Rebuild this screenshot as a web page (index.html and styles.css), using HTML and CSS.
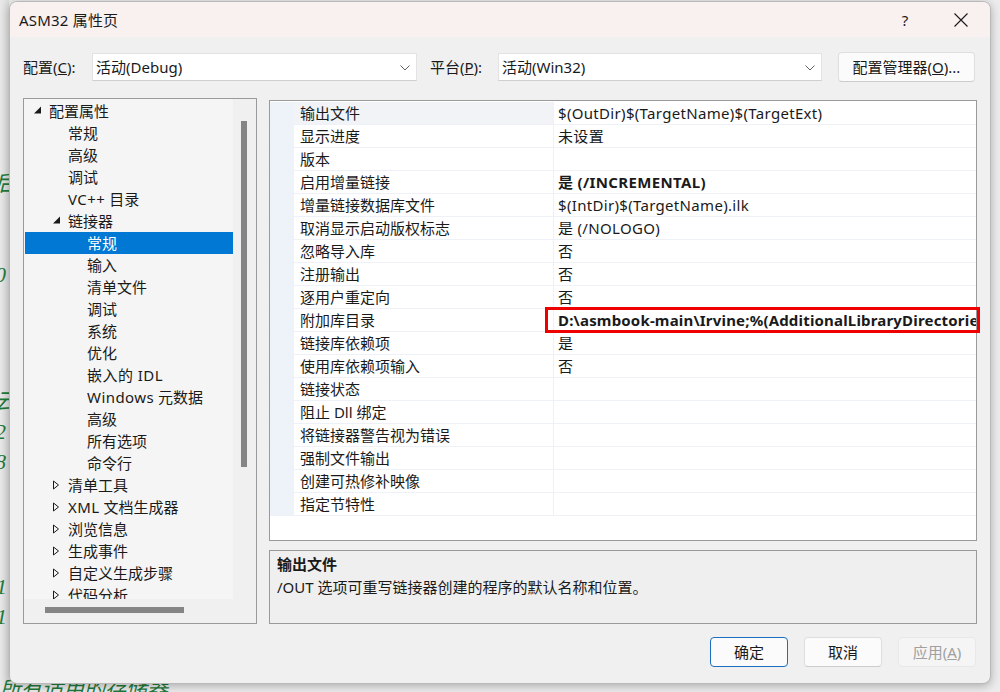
FILE: index.html
```html
<!DOCTYPE html>
<html lang="zh-CN">
<head>
<meta charset="utf-8">
<title>ASM32 属性页</title>
<link rel="stylesheet" href="styles.css">
</head>
<body>
<div class="desktop">
  <div class="bgwin">
    <span class="g g1">后</span>
    <span class="g g2">0</span>
    <span class="g g3">云</span>
    <span class="g g4">2</span>
    <span class="g g5">8</span>
    <span class="g g6">1</span>
    <span class="g g7">1</span>
    <span class="g g8">所有适用的存储器</span>
  </div>

  <div class="dialog">
    <div class="titlebar">
      <span class="title">ASM32 属性页</span>
      <div class="tb-btns">
        <span class="tb-help">?</span>
        <span class="tb-close"><svg width="16" height="16" viewBox="0 0 16 16"><path d="M1.5 1.5 L14.5 14.5 M14.5 1.5 L1.5 14.5" stroke="#1a1a1a" stroke-width="1.1" fill="none"/></svg></span>
      </div>
    </div>

    <div class="body">
      <div class="cfgrow">
        <span class="lbl lbl1">配置(<u>C</u>):</span>
        <div class="combo c1"><span>活动(Debug)</span><svg class="chev" width="10" height="6" viewBox="0 0 10 6"><path d="M0.5 0.5 L5 5 L9.5 0.5" stroke="#606060" stroke-width="1" fill="none"/></svg></div>
        <span class="lbl lbl2">平台(<u>P</u>):</span>
        <div class="combo c2"><span>活动(Win32)</span><svg class="chev" width="10" height="6" viewBox="0 0 10 6"><path d="M0.5 0.5 L5 5 L9.5 0.5" stroke="#606060" stroke-width="1" fill="none"/></svg></div>
        <button class="btn mgr">配置管理器(<u>O</u>)...</button>
      </div>

      <div class="main">
        <div class="tree">
          <div class="tree-content">
            <div class="node l0"><span class="tw"><svg width="9" height="9" viewBox="0 0 9 9"><path d="M8 0.5 L8 7.5 L1 7.5 Z" fill="#1a1a1a"/></svg></span>配置属性</div>
            <div class="node l1"><span class="tw"></span>常规</div>
            <div class="node l1"><span class="tw"></span>高级</div>
            <div class="node l1"><span class="tw"></span>调试</div>
            <div class="node l1"><span class="tw"></span><span class="lat">VC++</span>&nbsp;目录</div>
            <div class="node l1"><span class="tw"><svg width="9" height="9" viewBox="0 0 9 9"><path d="M8 0.5 L8 7.5 L1 7.5 Z" fill="#1a1a1a"/></svg></span>链接器</div>
            <div class="node l2 sel"><span class="tw"></span>常规</div>
            <div class="node l2"><span class="tw"></span>输入</div>
            <div class="node l2"><span class="tw"></span>清单文件</div>
            <div class="node l2"><span class="tw"></span>调试</div>
            <div class="node l2"><span class="tw"></span>系统</div>
            <div class="node l2"><span class="tw"></span>优化</div>
            <div class="node l2"><span class="tw"></span><span class="lat">嵌入的 IDL</span></div>
            <div class="node l2"><span class="tw"></span><span class="lat">Windows</span>&nbsp;元数据</div>
            <div class="node l2"><span class="tw"></span>高级</div>
            <div class="node l2"><span class="tw"></span>所有选项</div>
            <div class="node l2"><span class="tw"></span>命令行</div>
            <div class="node l1"><span class="tw"><svg class="col" width="9" height="10" viewBox="0 0 9 10"><path d="M1.5 1 L1.5 9 L6.5 5 Z" stroke="#1a1a1a" stroke-width="1" fill="none"/></svg></span>清单工具</div>
            <div class="node l1"><span class="tw"><svg class="col" width="9" height="10" viewBox="0 0 9 10"><path d="M1.5 1 L1.5 9 L6.5 5 Z" stroke="#1a1a1a" stroke-width="1" fill="none"/></svg></span><span class="lat">XML</span>&nbsp;文档生成器</div>
            <div class="node l1"><span class="tw"><svg class="col" width="9" height="10" viewBox="0 0 9 10"><path d="M1.5 1 L1.5 9 L6.5 5 Z" stroke="#1a1a1a" stroke-width="1" fill="none"/></svg></span>浏览信息</div>
            <div class="node l1"><span class="tw"><svg class="col" width="9" height="10" viewBox="0 0 9 10"><path d="M1.5 1 L1.5 9 L6.5 5 Z" stroke="#1a1a1a" stroke-width="1" fill="none"/></svg></span>生成事件</div>
            <div class="node l1"><span class="tw"><svg class="col" width="9" height="10" viewBox="0 0 9 10"><path d="M1.5 1 L1.5 9 L6.5 5 Z" stroke="#1a1a1a" stroke-width="1" fill="none"/></svg></span>自定义生成步骤</div>
            <div class="node l1"><span class="tw"><svg class="col" width="9" height="10" viewBox="0 0 9 10"><path d="M1.5 1 L1.5 9 L6.5 5 Z" stroke="#1a1a1a" stroke-width="1" fill="none"/></svg></span>代码分析</div>
          </div>
          <div class="vscroll"><div class="vthumb"></div></div>
          <div class="hscroll"><div class="hthumb"></div></div>
          <div class="corner"></div>
        </div>

        <div class="right">
          <div class="pgrid">
            <div class="prow sel0"><span class="pm"></span><span class="pn">输出文件</span><span class="pv">$(OutDir)$(TargetName)$(TargetExt)</span></div>
            <div class="prow"><span class="pm"></span><span class="pn">显示进度</span><span class="pv">未设置</span></div>
            <div class="prow"><span class="pm"></span><span class="pn">版本</span><span class="pv"></span></div>
            <div class="prow"><span class="pm"></span><span class="pn">启用增量链接</span><span class="pv b">是 (/INCREMENTAL)</span></div>
            <div class="prow"><span class="pm"></span><span class="pn">增量链接数据库文件</span><span class="pv">$(IntDir)$(TargetName).ilk</span></div>
            <div class="prow"><span class="pm"></span><span class="pn">取消显示启动版权标志</span><span class="pv">是 (/NOLOGO)</span></div>
            <div class="prow"><span class="pm"></span><span class="pn">忽略导入库</span><span class="pv">否</span></div>
            <div class="prow"><span class="pm"></span><span class="pn">注册输出</span><span class="pv">否</span></div>
            <div class="prow"><span class="pm"></span><span class="pn">逐用户重定向</span><span class="pv">否</span></div>
            <div class="prow"><span class="pm"></span><span class="pn">附加库目录</span><span class="pv b lib">D:\asmbook-main\Irvine;%(AdditionalLibraryDirectories)</span></div>
            <div class="prow"><span class="pm"></span><span class="pn">链接库依赖项</span><span class="pv">是</span></div>
            <div class="prow"><span class="pm"></span><span class="pn">使用库依赖项输入</span><span class="pv">否</span></div>
            <div class="prow"><span class="pm"></span><span class="pn">链接状态</span><span class="pv"></span></div>
            <div class="prow"><span class="pm"></span><span class="pn">阻止 Dll 绑定</span><span class="pv"></span></div>
            <div class="prow"><span class="pm"></span><span class="pn">将链接器警告视为错误</span><span class="pv"></span></div>
            <div class="prow"><span class="pm"></span><span class="pn">强制文件输出</span><span class="pv"></span></div>
            <div class="prow"><span class="pm"></span><span class="pn">创建可热修补映像</span><span class="pv"></span></div>
            <div class="prow"><span class="pm"></span><span class="pn">指定节特性</span><span class="pv"></span></div>
            <div class="redbox"></div>
          </div>
          <div class="desc">
            <div class="desc-title">输出文件</div>
            <div class="desc-text">/OUT 选项可重写链接器创建的程序的默认名称和位置。</div>
          </div>
        </div>
      </div>

      <div class="btnrow">
        <button class="btn ok">确定</button>
        <button class="btn">取消</button>
        <button class="btn dis">应用(<u>A</u>)</button>
      </div>
    </div>
  </div>
</div>
</body>
</html>
```

FILE: styles.css
```css
* { box-sizing: border-box; }
html, body { margin: 0; padding: 0; }
body {
  width: 1000px;
  height: 692px;
  overflow: hidden;
  font-family: "Noto Sans", "Noto Sans CJK SC", sans-serif;
  font-size: 15px;
  color: #1a1a1a;
  background: #e2e2e2;
}
.desktop {
  position: relative;
  width: 1000px;
  height: 692px;
  background: linear-gradient(to right, #e9e9e9 0, #dcdcdc 9px, #ececec 9px);
}
.bgwin { position: absolute; inset: 0; }
.g {
  position: absolute;
  font-family: "Liberation Serif", "Noto Sans CJK SC", serif;
  font-style: italic;
  color: #1f7a3a;
  font-size: 22px;
  line-height: 24px;
}
.g1 { left: -6px; top: 172px; }
.g2 { left: -5px; top: 263px; }
.g3 { left: -6px; top: 390px; }
.g4 { left: -5px; top: 420px; }
.g5 { left: -5px; top: 450px; }
.g6 { left: -4px; top: 575px; }
.g7 { left: -4px; top: 605px; }
.g8 { left: 0; top: 677px; font-size: 21px; }

.dialog {
  position: absolute;
  left: 9px;
  top: 1px;
  width: 982px;
  height: 683px;
  background: #f0f0f0;
  border: 1px solid #b9b9b9;
  border-radius: 8px;
  box-shadow: 0 2px 10px rgba(0,0,0,0.28);
  overflow: hidden;
}
.titlebar {
  height: 35px;
  background: #f9f0f0;
  display: flex;
  align-items: center;
  justify-content: space-between;
  padding-left: 9px;
}
.title { font-size: 15px; line-height: 20px; color: #1a1a1a; letter-spacing: 0.2px; }
.tb-btns { display: flex; align-items: center; height: 100%; }
.tb-help {
  width: 46px; text-align: center;
  font-size: 15px; line-height: 20px;
  margin-right: 10px;
}
.tb-close {
  width: 46px; height: 100%;
  display: flex; align-items: center; justify-content: center;
  margin-right: 6px;
}

.body { padding: 0 13px 0 13px; }

.cfgrow {
  margin-top: 15px;
  height: 30px;
  display: flex;
  align-items: center;
}
.lbl { line-height: 20px; white-space: nowrap; }
.lbl1 { width: 69px; }
.lbl2 { width: 68px; margin-left: 13px; }
.combo {
  height: 28px;
  background: #fff;
  border: 1px solid #e3e3e3;
  border-bottom-color: #cfcfcf;
  display: flex;
  align-items: center;
  justify-content: space-between;
  padding: 0 6px 0 3px;
  line-height: 20px;
}
.c1 { width: 325px; }
.c2 { width: 324px; }
.chev { margin-top: 1px; }
.btn {
  font-family: inherit;
  font-size: 15px;
  line-height: 20px;
  color: #1a1a1a;
  background: #fbfbfb;
  border: 1px solid #dedede;
  border-bottom-color: #cccccc;
  border-radius: 4px;
  height: 30px;
  padding: 0;
  width: 78px;
}
.btn u { text-decoration: underline; }
.mgr { width: 137px; margin-left: 16px; }

.main {
  margin-top: 16px;
  height: 526px;
  display: flex;
  gap: 12px;
}
.tree {
  width: 234px;
  height: 526px;
  border: 1px solid #9a9a9a;
  background: #f0f0f0;
  display: grid;
  grid-template-columns: 209px 23px;
  grid-template-rows: 500px 24px;
}
.tree-content {
  background: #f5f5f5;
  padding: 1px 0 0 1px;
  overflow: hidden;
}
.node {
  height: 22px;
  display: flex;
  align-items: center;
  white-space: nowrap;
  line-height: 20px;
}
.lat { letter-spacing: 0.45px; }
.node.l0 { padding-left: 8px; }
.node.l1 { padding-left: 27px; }
.node.l2 { padding-left: 46px; }
.tw {
  width: 16px;
  height: 22px;
  flex: none;
  display: flex;
  align-items: center;
}
.tw svg { display: block; margin-top: -1px; }
.tw svg.col { margin-top: 0; margin-left: 0; }
.node.sel { background: #0078d4; color: #fff; }
.vscroll {
  background: #f0f0f0;
  position: relative;
}
.vthumb {
  position: absolute;
  left: 8px;
  top: 22px;
  width: 6px;
  height: 346px;
  background: #858585;
}
.hscroll {
  background: #f0f0f0;
  position: relative;
}
.hthumb {
  position: absolute;
  left: 21px;
  top: 8px;
  width: 139px;
  height: 6px;
  background: #858585;
}
.corner { background: #f0f0f0; }

.right {
  width: 708px;
  display: flex;
  flex-direction: column;
}
.pgrid {
  position: relative;
  margin-top: 2px;
  height: 441px;
  border: 1px solid #9a9a9a;
  background: #fff;
  padding-top: 1px;
}
.prow {
  height: 23px;
  display: flex;
  border-bottom: 1px solid #eef1f7;
  line-height: 20px;
  white-space: nowrap;
}
.pm {
  width: 24px;
  flex: none;
  background: #eef2f9;
}
.pn {
  width: 260px;
  flex: none;
  padding: 1px 0 0 6px;
  border-right: 1px solid #eef1f7;
}
.prow.sel0 .pn { background: #f1f3f7; }
.pv {
  flex: 1;
  padding: 1px 0 0 4px;
  overflow: hidden;
  letter-spacing: 0.32px;
}
.pv.b { font-weight: bold; letter-spacing: 0.35px; }
.pv.b.lib { letter-spacing: 0.18px; }
.redbox {
  position: absolute;
  left: 275px;
  top: 206px;
  width: 435px;
  height: 26px;
  border: 3px solid #ee0000;
}
.desc {
  margin-top: 9px;
  height: 74px;
  border: 1px solid #9a9a9a;
  background: #efefef;
  padding: 2px 0 0 7px;
  line-height: 23px;
}
.desc-title { font-weight: bold; }

.btnrow {
  margin-top: 13px;
  display: flex;
  justify-content: flex-end;
  gap: 16px;
  padding-right: 1px;
}
.btn.ok { border: 1px solid #1a6fc2; }
.btn.dis { color: #a0a0a0; background: #f5f5f5; border-color: #e8e8e8; }
```
